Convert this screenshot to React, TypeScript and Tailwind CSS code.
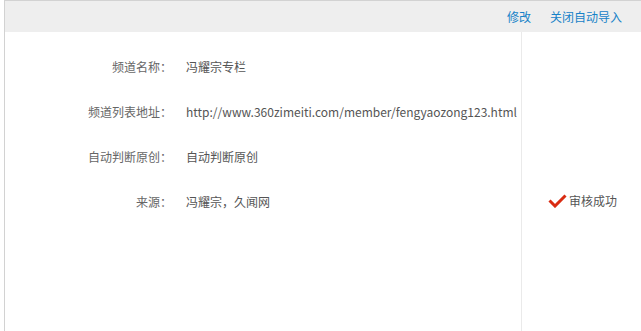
import React from "react";

const rows: [string, string][] = [
  ["频道名称：", "冯耀宗专栏"],
  ["频道列表地址：", "http://www.360zimeiti.com/member/fengyaozong123.html"],
  ["自动判断原创：", "自动判断原创"],
  ["来源：", "冯耀宗，久闻网"],
];

export default function App() {
  return (
    <div
      className="w-[641px] h-[331px] bg-white pl-[4px] overflow-hidden"
      style={{ fontFamily: '"Microsoft YaHei", "Noto Sans CJK SC", "Liberation Sans", sans-serif' }}
    >
      <div className="h-full border-l border-t border-[#d2d2d2] flex flex-col">
        <div className="h-[31px] bg-[#eeeeee] flex items-center justify-end text-[12px] text-[#1682c8] pr-[19px] gap-[19px] shrink-0">
          <span>修改</span>
          <span>关闭自动导入</span>
        </div>
        <div className="flex flex-1">
          <div className="w-[517px] pt-[12px] border-r border-[#eaeaea] text-[12px]">
            {rows.map(([label, value]) => (
              <div key={label} className="h-[45px] flex items-center">
                <div className="w-[167px] text-right text-[#666]">{label}</div>
                <div className="pl-[14px] text-[#555] whitespace-nowrap">{value}</div>
              </div>
            ))}
          </div>
          <div className="flex-1 flex justify-center pt-[160px] pl-[2px]">
            <div className="flex items-center h-[18px] text-[12px] text-[#555]">
              <svg width="19" height="14" viewBox="0 0 19 14" className="mr-[2px]">
                <path d="M1.5 6.5 L7 12 L17.5 1.5" fill="none" stroke="#d92b12" strokeWidth="3" strokeLinejoin="miter" />
              </svg>
              <span>审核成功</span>
            </div>
          </div>
        </div>
      </div>
    </div>
  );
}
